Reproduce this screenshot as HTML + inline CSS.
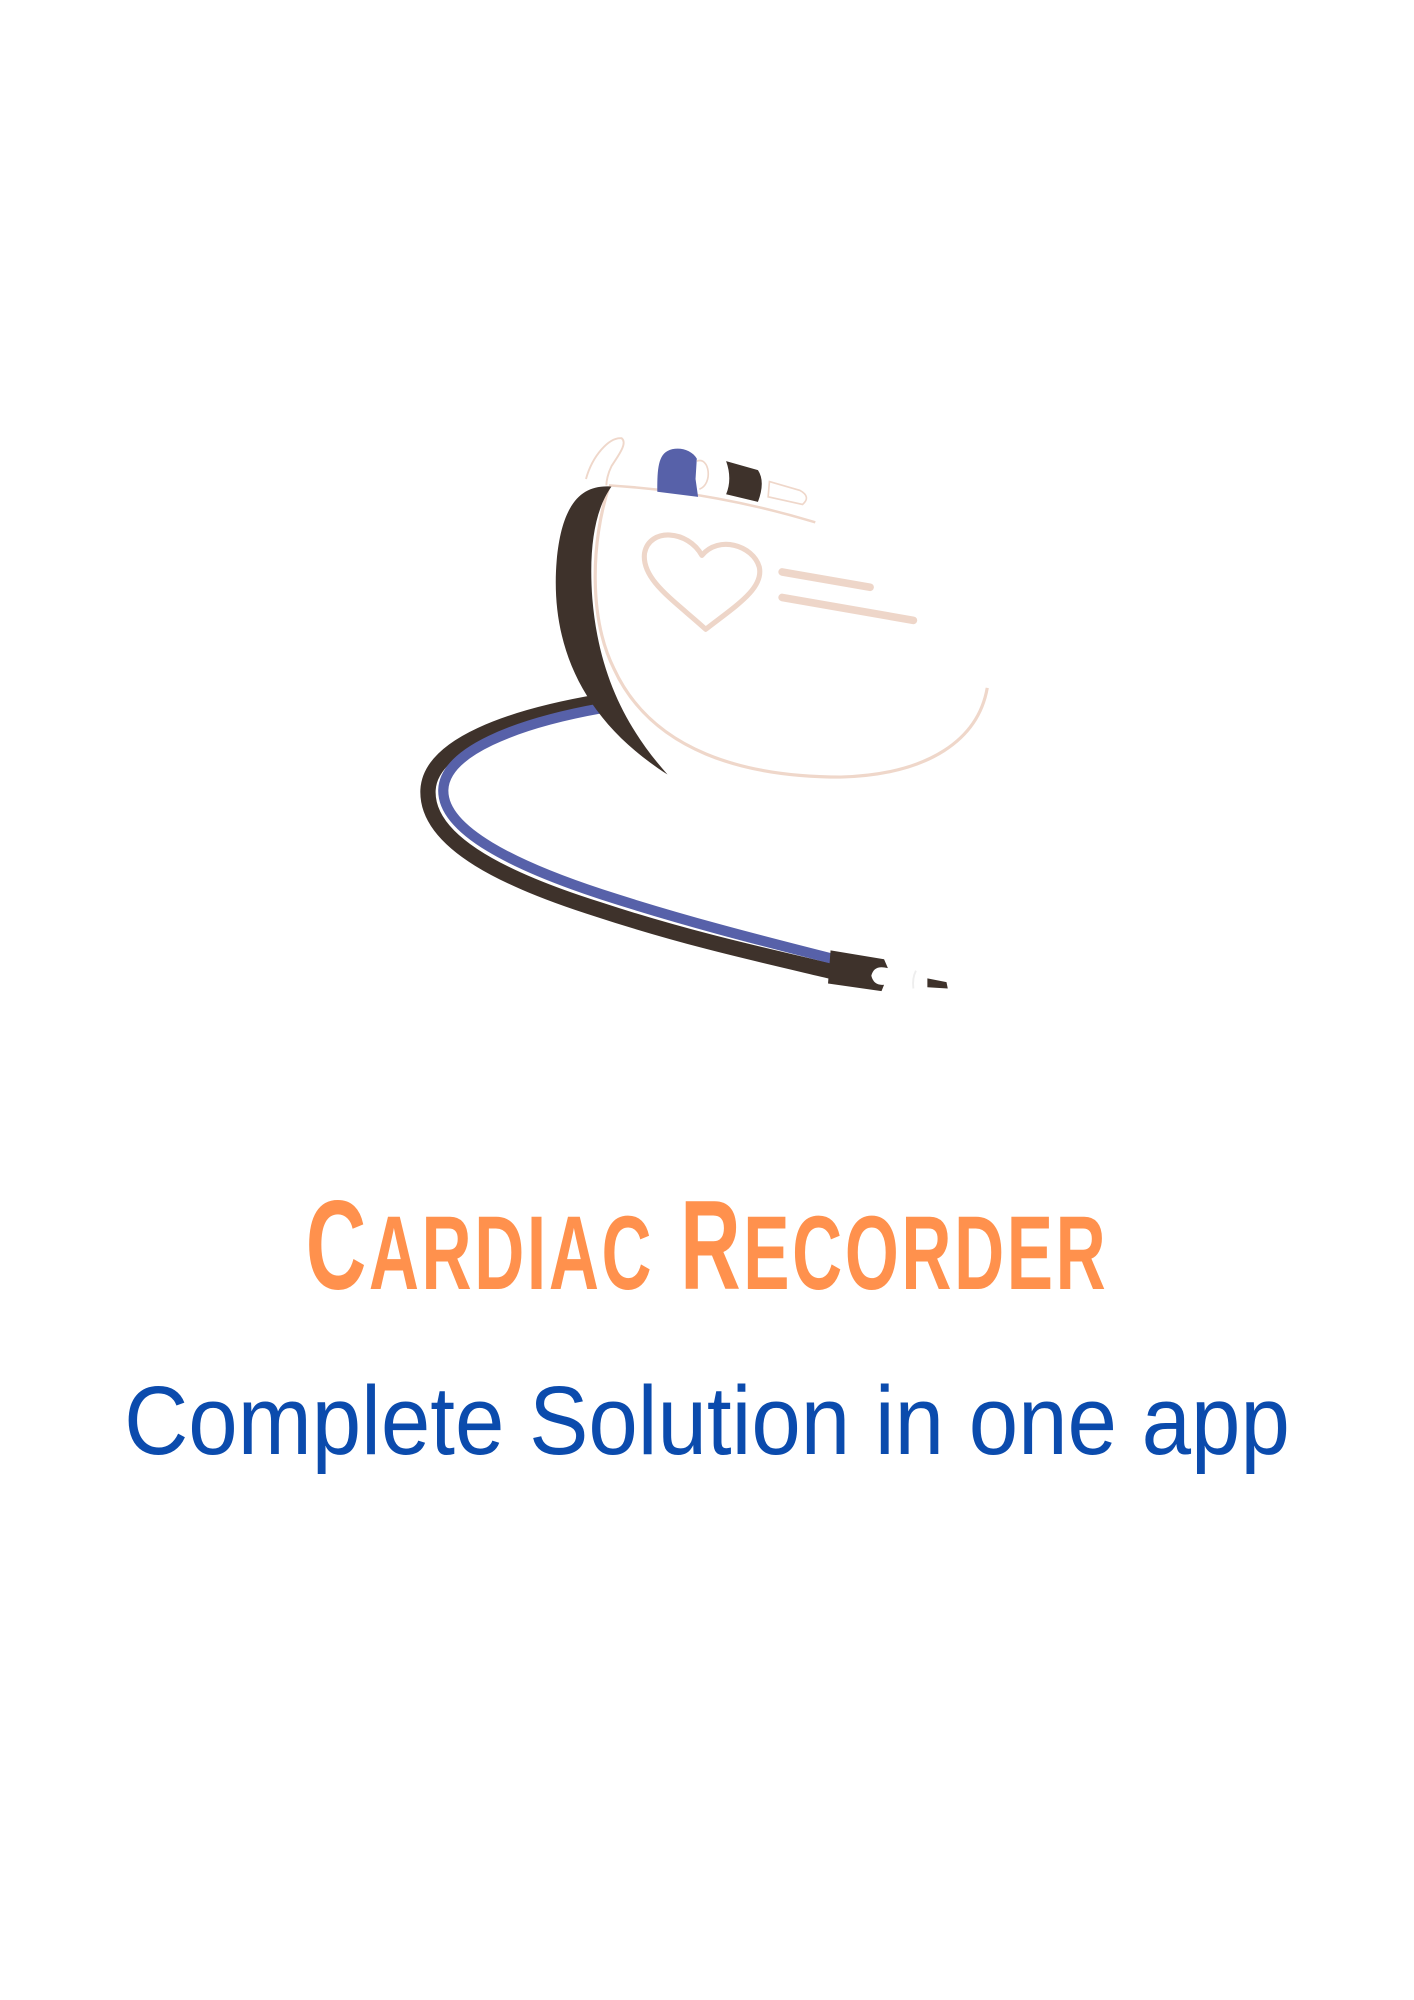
<!DOCTYPE html>
<html><head><meta charset="utf-8"><style>
html,body{margin:0;padding:0;background:#fff;}
body{width:1414px;height:2000px;position:relative;overflow:hidden;}
svg{position:absolute;left:0;top:0;}
.t{position:absolute;left:0;width:1414px;text-align:center;white-space:nowrap;}
#title{top:1180px;font-family:"Liberation Sans Narrow","Liberation Sans",sans-serif;font-weight:bold;color:#FF914D;font-size:127px;line-height:130px;transform:scaleX(0.66);letter-spacing:4px;}
#title span{font-size:105px;}
#sub{top:1366px;font-family:"Liberation Sans",sans-serif;color:#0B4BAD;font-size:97px;line-height:110px;transform:scaleX(0.916);}
</style></head><body>
<svg width="1414" height="2000" viewBox="0 0 1110 1570" preserveAspectRatio="none">
 <path d="M470,551 C400,563 338,585 336,620 C334,662 400,692 470,714 C540,737 600,750 655,763" fill="none" stroke="#3E322B" stroke-width="12"/>
 <path d="M472,556 C405,568 349,590 348,620 C347,652 405,680 472,702 C540,724 600,739 655,753" fill="none" stroke="#5761A9" stroke-width="8"/>
 <path d="M652,746 L694,753 L697,760 Q686,757 684,766 Q686,774 694,773 L692,778 L650,772 Z" fill="#3E322B"/>
 <path d="M728,768 L743,771 L744,776 L728,775 Z" fill="#3E322B"/>
 <path d="M719,762 Q716,768 717,776" fill="none" stroke="#eee" stroke-width="1.5"/>
 <path d="M478,382 C464,425 462,485 482,525 C512,590 585,610 660,610 C730,608 768,580 775,540" fill="none" stroke="#EFD7CA" stroke-width="2.5"/>
 <path d="M478,381 C540,385 590,395 640,410" fill="none" stroke="#EFD7CA" stroke-width="2"/>
 <path d="M480,382 C456,380 441,396 437,440 C432,500 452,562 524,608 C492,572 470,530 465,470 C462,430 467,400 480,382 Z" fill="#3E322B"/>
 <path d="M551,436 C540,416 510,414 506,434 C503,455 530,472 554,494 C577,476 600,462 596,445 C591,428 564,420 551,436 Z" fill="none" stroke="#EED6C9" stroke-width="4" stroke-linejoin="round"/>
 <path d="M614,449 L683,461 M614,469 L717,487" stroke="#EED6C9" stroke-width="6" stroke-linecap="round"/>
 <path d="M460,376 C465,358 478,343 488,344 C493,348 485,358 480,366 C477,372 476,378 476,381" fill="none" stroke="#EFD7CA" stroke-width="1.5"/>
 <path d="M516,386 C516,372 516,358 524,354 C532,350 543,353 547,360 L546,376 L548,390 Z" fill="#5761A9"/>
 <path d="M547,362 C557,358 560,380 549,384" fill="none" stroke="#EFD7CA" stroke-width="1.3"/>
 <path d="M570,362 L595,369 Q601,378 595,394 L570,388 Q575,376 570,362 Z" fill="#3E322B"/>
 <path d="M604,378 L628,385 Q637,390 630,396 L603,390 Z" fill="none" stroke="#EFD7CA" stroke-width="1.3"/>
</svg>
<div class="t" id="title">C<span>ARDIAC</span> R<span>ECORDER</span></div>
<div class="t" id="sub">Complete Solution in one app</div>
</body></html>
